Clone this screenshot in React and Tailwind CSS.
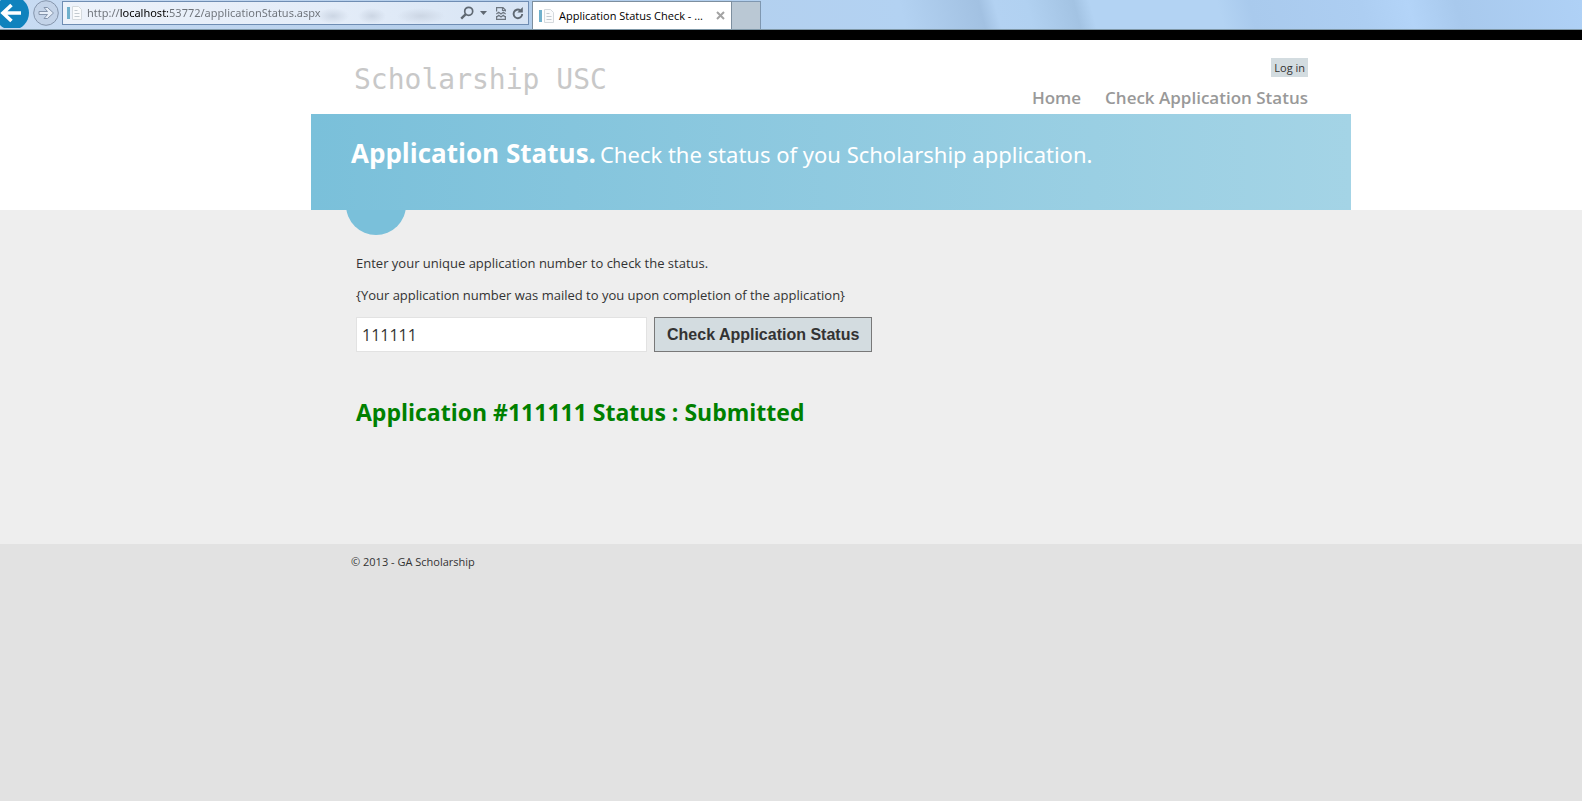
import React, { useState } from "react";

function PageIcon() {
  return (
    <svg width="16" height="16" viewBox="0 0 16 16" className="shrink-0" aria-hidden="true">
      <rect x="0" y="2" width="3" height="12" fill="#6fb0cc" />
      <path d="M5.5 1.5h6l3 3v10h-9z" fill="#fafbfc" stroke="#d5dade" />
      <path d="M7.500 5.500h3M7.500 8.500h5M7.500 11.500h5" stroke="#c3cad0" />
    </svg>
  );
}

function SearchIcon() {
  return (
    <svg width="14" height="14" viewBox="0 0 14 14" aria-hidden="true">
      <circle cx="8.700" cy="5.300" r="4" fill="none" stroke="#5f6872" strokeWidth="1.700" />
      <path d="M5.800 8.200L1.200 12.600" stroke="#5f6872" strokeWidth="2.400" />
    </svg>
  );
}

function CompatIcon() {
  return (
    <svg width="10" height="13" viewBox="0 0 10 13" fill="none" stroke="#6d7680" strokeWidth="1.200" aria-hidden="true">
      <path d="M.6 4.500V.6h6.400l2.400 2.400v1.500M.6 9v3.400h8.800V9M6.500 .6v2.900h2.900" />
      <path d="M.3 7l2.400-1.800L5 7l2.300-1.800L9.700 7M.6 10l2.200-1.800L5 10l2.200-1.800L9.400 10" />
    </svg>
  );
}

function ReloadIcon() {
  return (
    <svg width="12" height="14" viewBox="0 0 12 14" aria-hidden="true">
      <path d="M10.200 8A4.300 4.300 0 1 1 8.300 4.300" fill="none" stroke="#5f6872" strokeWidth="1.900" />
      <path d="M10.800 1v5.500H5.300z" fill="#5f6872" />
    </svg>
  );
}

function BrowserBar() {
  return (
    <div className="flex h-[30px] items-start overflow-hidden border-b border-[#7f97a6] bg-[linear-gradient(75deg,#c9dcf3_0%,#b3cdea_30%,#b3d2f2_57%,#a2c1e2_62%,#b3d2f2_63%,#b1d1f1_65%,#a3c3e3_68%,#b3d3f3_69%,#b3d3f3_77%,#a9caed_79%,#adcef2_86%,#b3d4f8_89%,#a8c9ed_92%,#afd1f6_100%)]">
      <button type="button" aria-label="Back" className="h-7 w-[30px] shrink-0">
        <svg width="30" height="28" viewBox="0 0 30 28">
          <circle cx="12" cy="13" r="17" fill="#0f82bd" />
          <path d="M21 13H4M11.500 5l-8.500 8 8.500 8" fill="none" stroke="#fff" strokeWidth="3.600" />
        </svg>
      </button>
      <button type="button" aria-label="Forward" className="ml-[3px] h-7 w-[27px] shrink-0">
        <svg width="27" height="28" viewBox="0 0 27 28">
          <circle cx="13" cy="13" r="12.300" fill="#c3d3e8" stroke="#8595ac" />
          <path d="M6 11.500h8.500l-3.500-4h3.500l6 5.500-6 5.500h-3.500l3.500-4H6z" fill="#e6eef8" stroke="#8595ac" />
        </svg>
      </button>
      <div className="mt-px ml-0.5 flex h-6 w-[467px] shrink-0 items-center border border-[#6f8db3] bg-[radial-gradient(16px_8px_at_270px_14px,#ccd6e4,transparent),radial-gradient(14px_8px_at_309px_14px,#ccd6e4,transparent),radial-gradient(24px_8px_at_358px_14px,#ccd6e4,transparent),linear-gradient(90deg,#edf2fa,#e3ecf8_60%,#d7e4f4)] pr-1 pl-1">
        <PageIcon />
        <input
          type="text"
          aria-label="Address"
          defaultValue="http://localhost:53772/applicationStatus.aspx"
          className="ml-1 min-w-0 flex-1 bg-[linear-gradient(90deg,#6c7178_33px,#000_33px,#000_81px,#6c7178_81px)] bg-clip-text font-['Noto_Sans','Open_Sans',sans-serif] text-[11px] leading-5 text-transparent outline-none"
        />
        <button type="button" aria-label="Search"><SearchIcon /></button>
        <button type="button" aria-label="Show address list" className="ml-1.5">
          <svg width="7" height="4" viewBox="0 0 7 4"><path d="M0 0h7L3.500 4z" fill="#5f6872" /></svg>
        </button>
        <button type="button" aria-label="Compatibility view" className="ml-[9px]"><CompatIcon /></button>
        <button type="button" aria-label="Refresh" className="ml-1.5"><ReloadIcon /></button>
      </div>
      <div className="mt-px ml-[3px] flex h-7 w-[200px] shrink-0 items-center border border-b-0 border-[#7d8f9f] bg-white px-1.5">
        <PageIcon />
        <span className="ml-1 flex-1 font-['Open_Sans','Noto_Sans',sans-serif] text-[11px] leading-5 text-black">
          Application Status Check - ...
        </span>
        <button type="button" aria-label="Close tab">
          <svg width="9" height="9" viewBox="0 0 9 9"><path d="M1 1l7 7M8 1L1 8" stroke="#a3a3a3" strokeWidth="2" /></svg>
        </button>
      </div>
      <button type="button" aria-label="New tab" className="mt-px h-7 w-[29px] shrink-0 border border-b-0 border-l-0 border-[#7f97b0] bg-[#bac8d4]" />
    </div>
  );
}

export default function App() {
  const [number, setNumber] = useState("111111");
  return (
    <div className="min-h-screen bg-[#e2e2e2] font-['Open_Sans','Noto_Sans',sans-serif] text-[#333]">
      <BrowserBar />
      <header className="border-t-10 border-black bg-white pl-20">
        <div className="mx-auto max-w-[1040px]">
          <div className="flex h-[74px] justify-between px-[43px]">
            <p className="pt-5 font-['DejaVu_Sans_Mono',monospace] text-[28px] leading-10 text-[#c8c8c8]">
              <a href="#home">Scholarship USC</a>
            </p>
            <div className="flex flex-col items-end pt-[18px]">
              <a href="#login" className="bg-[#d3dce0] px-[3px] text-[11px] leading-[19px]">Log in</a>
              <nav className="mt-[9px] flex gap-6 text-[17px] leading-6 font-semibold text-[#999]">
                <a href="#home">Home</a>
                <a href="#status">Check Application Status</a>
              </nav>
            </div>
          </div>
          <section className="relative h-24 bg-linear-to-r from-[#7ac0da] to-[#a4d4e6] px-10 pt-[19px] text-white">
            <div className="flex items-baseline gap-1 leading-10">
              <h1 className="text-[26px] font-bold">Application Status.</h1>
              <h2 className="font-['Noto_Sans','Open_Sans',sans-serif] text-[22px]">
                Check the status of you Scholarship application.
              </h2>
            </div>
            <div className="absolute top-full left-[35px] flex h-[25px] w-[60px] items-end overflow-hidden">
              <div className="size-[60px] shrink-0 rounded-full bg-[#7ac0da]" />
            </div>
          </section>
        </div>
      </header>
      <main className="bg-[#eee] pl-20">
        <div className="mx-auto min-h-[334px] max-w-[1040px] px-[45px] pt-[43px] text-[13px] leading-5">
          <p>Enter your unique application number to check the status.</p>
          <p className="mt-3">
            <label htmlFor="number">{"{Your application number was mailed to you upon completion of the application}"}</label>
          </p>
          <form className="mt-3 flex gap-[7px]" onSubmit={(e) => e.preventDefault()}>
            <input
              id="number"
              type="text"
              value={number}
              onChange={(e) => setNumber(e.target.value)}
              className="h-[35px] w-[291px] border border-[#e2e2e2] bg-white px-[5px] text-base outline-none"
            />
            <button
              type="submit"
              className="h-[35px] border border-[#787878] bg-[#d3dce0] px-3 font-['Liberation_Sans',Arial,sans-serif] text-base font-bold"
            >
              Check Application Status
            </button>
          </form>
          <p className="mt-11 text-[23px] leading-8 font-bold text-[#008000]">Application #111111 Status : Submitted</p>
        </div>
      </main>
      <footer className="pl-20">
        <div className="mx-auto max-w-[1040px] px-10 pt-2 text-[11px] leading-5">
          <p>© 2013 - GA Scholarship</p>
        </div>
      </footer>
    </div>
  );
}
